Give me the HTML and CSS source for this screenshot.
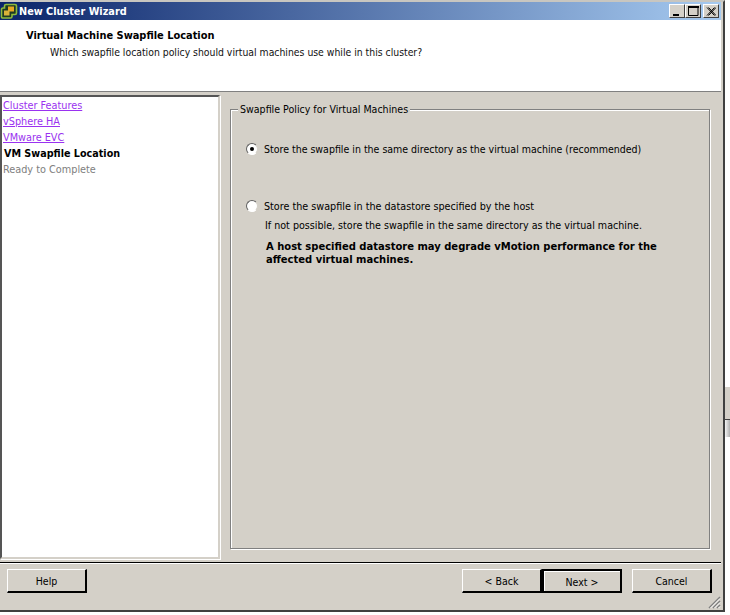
FILE: index.html
```html
<!DOCTYPE html>
<html lang="en">
<head>
<meta charset="utf-8">
<title>New Cluster Wizard</title>
<link rel="stylesheet" href="styles.css">
</head>
<body>
<div class="screen">
  <div class="window">
    <div class="titlebar">
      <svg class="app-icon" width="18" height="16" viewBox="0 0 18 16">
        <path d="M6 1.500h9a1.500 1.500 0 0 1 1.500 1.500v7a1.500 1.500 0 0 1-1.500 1.500h-3v2a1.500 1.500 0 0 1-1.500 1.500H3A1.500 1.500 0 0 1 1.500 13V6.500A1.500 1.500 0 0 1 3 5h1.500V3A1.500 1.500 0 0 1 6 1.500z" fill="#1d3a22" stroke="#8dbb3c" stroke-width="1.600"/>
        <rect x="8" y="3.500" width="6" height="5" fill="#e9a823"/>
        <rect x="4" y="7.500" width="5.500" height="5" fill="#d9b23a"/>
      </svg>
      <span class="title-text">New Cluster Wizard</span>
      <div class="title-buttons">
        <span class="tbtn"><svg width="10" height="10" viewBox="0 0 10 10"><rect x="1" y="8" width="6" height="2" fill="#000"/></svg></span>
        <span class="tbtn"><svg width="11" height="10" viewBox="0 0 11 10"><path d="M0.500 1.500H10V9.500H0.500Z" fill="none" stroke="#000"/><rect x="0" y="0" width="11" height="2" fill="#000"/></svg></span>
        <span class="tbtn tbtn-close"><svg width="10" height="9" viewBox="0 0 10 9"><path d="M1 0.500L8.500 8.500M2.500 0.500L10 8.500M8.500 0.500L1 8.500M10 0.500L2.500 8.500" stroke="#000" fill="none" stroke-width="1"/></svg></span>
      </div>
    </div>
    <div class="body">
      <header class="header">
        <h1 class="heading">Virtual Machine Swapfile Location</h1>
        <p class="subheading">Which swapfile location policy should virtual machines use while in this cluster?</p>
      </header>
      <div class="main">
        <nav class="steps">
          <a class="step step-link">Cluster Features</a>
          <a class="step step-link">vSphere HA</a>
          <a class="step step-link">VMware EVC</a>
          <span class="step step-current">VM Swapfile Location</span>
          <span class="step step-future">Ready to Complete</span>
        </nav>
        <section class="group">
          <div class="legend">Swapfile Policy for Virtual Machines</div>
          <div class="option option-first">
            <span class="radio radio-on"></span>
            <span>Store the swapfile in the same directory as the virtual machine (recommended)</span>
          </div>
          <div class="option option-second">
            <span class="radio"></span>
            <span>Store the swapfile in the datastore specified by the host</span>
          </div>
          <p class="note">If not possible, store the swapfile in the same directory as the virtual machine.</p>
          <p class="warning">A host specified datastore may degrade vMotion performance for the affected virtual machines.</p>
        </section>
      </div>
      <footer class="footer">
        <button class="btn">Help</button>
        <div class="spacer"></div>
        <button class="btn">&lt; Back</button>
        <button class="btn btn-default">Next &gt;</button>
        <button class="btn btn-cancel">Cancel</button>
        <svg class="grip" width="14" height="14" viewBox="0 0 14 14">
          <path d="M13 2L2 13M13 6L6 13M13 10L10 13" stroke="#808080" stroke-width="1.500" fill="none"/>
          <path d="M13 3.500L3.500 13M13 7.500L7.500 13M13 11.500L11.500 13" stroke="#fff" stroke-width="1" fill="none"/>
        </svg>
      </footer>
    </div>
  </div>
  <aside class="desktop">
    <div class="desk-panel"></div>
    <div class="desk-scroll"></div>
  </aside>
</div>
</body>
</html>
```
FILE: styles.css
```css
* { box-sizing: border-box; }
html, body { margin: 0; padding: 0; background: #fff; }
body {
  width: 730px;
  height: 615px;
  overflow: hidden;
  font-family: "DejaVu Sans", "Liberation Sans", sans-serif;
  font-stretch: condensed;
  font-size: 10.8px;
  color: #000;
}
.screen { display: flex; width: 730px; height: 615px; }
.window {
  width: 725px;
  height: 612px;
  display: flex;
  flex-direction: column;
  background: #d4d0c8;
  border-top: 2px solid #c8c6c0;
  border-right: 2px solid #404040;
  border-bottom: 2px solid #404040;
}
.titlebar {
  height: 18px;
  flex: none;
  display: flex;
  align-items: center;
  margin-right: 2px;
  background: linear-gradient(90deg, #0a246a 0%, #a6caf0 100%);
  color: #fff;
}
.app-icon { margin-left: 0; flex: none; }
.title-text { margin-left: 1px; font-weight: bold; font-size: 10.8px; }
.title-buttons { margin-left: auto; margin-right: 2px; display: flex; }
.tbtn {
  width: 16px;
  height: 14px;
  display: flex;
  align-items: center;
  justify-content: center;
  background: #d4d0c8;
  border: 1px solid;
  border-color: #fff #404040 #404040 #fff;
}
.tbtn-close { margin-left: 2px; }
.body { flex: 1; display: flex; flex-direction: column; min-height: 0; margin-right: 2px; }
.header {
  height: 72px;
  flex: none;
  background: #fff;
  border-bottom: 1px solid #808080;
  padding: 9px 0 0 26px;
}
.heading { margin: 0; font-size: 10.95px; font-weight: bold; line-height: 14px; }
.subheading { margin: 2px 0 0 24px; font-size: 10.35px; line-height: 14px; color: #111; }
.main { flex: 1; display: flex; min-height: 0; padding: 3px 0 0 0; }
.steps {
  width: 220px;
  height: 464px;
  flex: none;
  display: flex;
  flex-direction: column;
  background: #fff;
  border: 2px solid;
  border-color: #555 #d4d0c8 #d4d0c8 #555;
  box-shadow: 1px 1px 0 #fff;
  padding: 1px 0 0 1px;
}
.step { height: 16px; line-height: 16px; white-space: nowrap; }
.step-link { color: #9a32f0; text-decoration: underline; }
.step-current { margin-left: 1px; font-weight: bold; font-size: 10.7px; }
.step-future { color: #808080; }
.group {
  position: relative;
  width: 480px;
  height: 440px;
  margin: 14px 0 0 10px;
  border: 1px solid #808080;
  box-shadow: inset 1px 1px 0 #fff, 1px 1px 0 #fff;
}
.legend {
  position: absolute;
  left: 7px;
  top: -7px;
  padding: 0 2px;
  font-size: 10.55px;
  line-height: 13px;
  background: #d4d0c8;
}
.option { display: flex; align-items: center; height: 16px; padding-left: 15px; }
.option-first { margin-top: 31px; font-size: 10.5px; }
.option-second { margin-top: 41px; font-size: 10.7px; }
.radio {
  width: 12px;
  height: 12px;
  margin-right: 6px;
  border-radius: 50%;
  flex: none;
  background: #fff;
  border: 1px solid;
  border-color: #606060 #d4d0c8 #fff #606060;
  display: flex;
  align-items: center;
  justify-content: center;
}
.radio-on::after {
  content: "";
  width: 4px;
  height: 4px;
  border-radius: 50%;
  background: #000;
}
.note { margin: 4px 0 0 34px; font-size: 10.63px; line-height: 16px; }
.warning { margin: 6px 0 0 35px; width: 425px; font-weight: bold; font-size: 11.1px; line-height: 13px; }
.footer {
  position: relative;
  flex: none;
  height: 48px;
  border-top: 1px solid #000;
  box-shadow: inset 0 1px 0 #fff;
  display: flex;
  align-items: flex-start;
  padding: 6px 9px 0 7px;
}
.spacer { flex: 1; }
.btn {
  width: 80px;
  height: 24px;
  padding: 1px 0 0;
  font: inherit;
  font-size: 10.5px;
  color: #000;
  background: #d4d0c8;
  border: 1px solid;
  border-color: #fff #000 #000 #fff;
  border-width: 1px 2px 2px 1px;
}
.btn-default { border: 2px solid #000; box-shadow: inset 1px 1px 0 #fff; }
.btn-cancel { margin-left: 10px; }
.grip { position: absolute; right: 0; bottom: 1px; }
.desktop { flex: 1; display: flex; flex-direction: column; padding-top: 387px; }
.desk-panel { height: 33px; background: #d4d0c8; border-bottom: 1px solid #404040; }
.desk-scroll { height: 17px; background: linear-gradient(90deg, #f4f4f4, #b0b0b0); }
```
